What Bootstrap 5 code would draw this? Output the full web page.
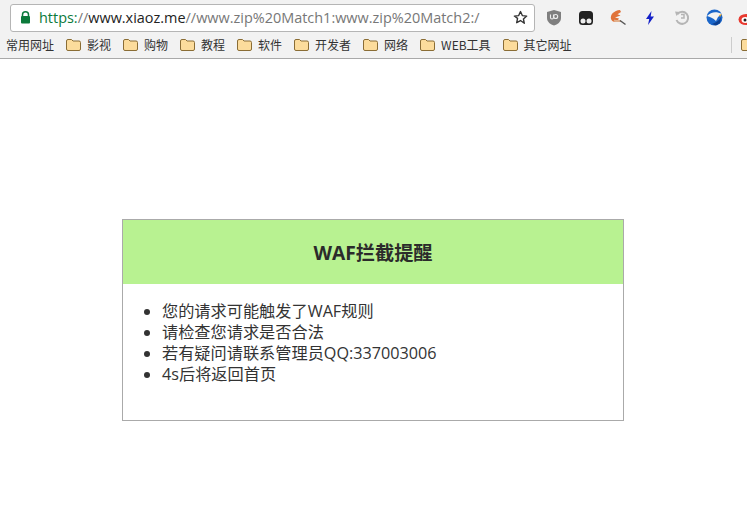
<!DOCTYPE html>
<html lang="zh-CN">
<head>
<meta charset="utf-8">
<title>WAF拦截提醒</title>
<link href="https://cdn.jsdelivr.net/npm/bootstrap@5.3.0/dist/css/bootstrap.min.css" rel="stylesheet">
<style>
html,body{height:100%;overflow:hidden}
body{background:#fff;color:#333;font-family:"Open Sans","Noto Sans CJK SC",sans-serif}
.chrome-bar{background:#f2f2f2;border-bottom:1px solid #a9a9a9;height:59px;font-family:"Noto Sans CJK SC",sans-serif}
.url-row{height:33px;padding:2px 0 0 10px;overflow:hidden}
.omni{width:525px;flex:none;height:28px;background:#fff;border:1px solid #b5b5b5;border-radius:3px;padding:0 6px 0 9px}
.url-text{font-family:"Open Sans",sans-serif;font-size:14.45px;color:#777;margin-left:8px;white-space:nowrap}
.url-scheme{color:#0b7a3b}
.url-host{color:#222}
.ext-row{margin-left:3px;flex:none}
.ext{width:32px;height:28px;display:flex;align-items:center;justify-content:center;flex:none}
.bm-row{height:23px;padding-left:6px;font-size:12px;color:#333;white-space:nowrap;overflow:hidden}
.bm{display:flex;align-items:center;gap:6px;margin-right:12px}
.bm-first{margin-right:12px}
.bm-sep{width:1px;height:16px;background:#ccc;margin-left:147px;margin-right:9px;flex:none}
.bm-last{flex:none}
.notice{width:502px;margin:160px 123px 0 122px;border:1px solid #aaa;border-radius:0}
.notice-head{background:#b8f291;height:64px;border:0;border-radius:0!important;font-size:19.2px;font-weight:700;color:#2b2b2b;padding-top:2px;padding-bottom:0}
.notice-body{padding:17px 0 35px}
.notice-list{margin:0;padding-left:39px;font-size:16.2px;line-height:21px;color:#333}
</style>
</head>
<body>
<div class="chrome-bar">
  <div class="url-row d-flex align-items-center">
    <div class="omni d-flex align-items-center">
      <svg width="11" height="13" viewBox="0 0 11 13"><path d="M2.5 5.5V3.8a3 3 0 0 1 6 0v1.7" fill="none" stroke="#0b7a3b" stroke-width="1.5"/><rect x="1" y="5" width="9" height="7.5" rx="1" fill="#0b7a3b"/></svg>
      <span class="url-text"><span class="url-scheme">https:</span>//<span class="url-host">www.xiaoz.me</span>//www.zip%20Match1:www.zip%20Match2:/</span>
      <svg class="ms-auto" width="15" height="15" viewBox="0 0 24 24"><path d="M12 2.5l2.9 6.4 7 .8-5.2 4.7 1.4 6.9L12 16.9l-6.1 3.4 1.4-6.9L2.1 9.7l7-.8z" fill="none" stroke="#333" stroke-width="2.2" stroke-linejoin="round"/></svg>
    </div>
    <div class="ext-row d-flex align-items-center">
      <div class="ext"><svg width="16" height="17" viewBox="0 0 16 17"><path d="M8 1l7 2v6c0 4-3.500 6.500-7 7.500C4.500 15.500 1 13 1 9V3z" fill="#7f7f7f"/><circle cx="9.700" cy="7.500" r="2" fill="none" stroke="#eee" stroke-width="1.100"/><path d="M4.500 5.500v3a1.500 1.500 0 0 0 3 0v-3" fill="none" stroke="#eee" stroke-width="1.100"/></svg></div>
      <div class="ext"><svg width="16" height="16" viewBox="0 0 16 16"><rect x="1" y="1" width="14" height="14" rx="3.500" fill="#222"/><circle cx="5" cy="11" r="2.500" fill="#eee"/><circle cx="11" cy="11" r="2.500" fill="#eee"/></svg></div>
      <div class="ext"><svg width="18" height="18" viewBox="0 0 18 18"><path d="M11 1C5 1.500 1 5.500 2 10c1 2.500 3.500 3.500 6 2.500l2-3-4-1 5.500-2-3-1.200L12 3z" fill="#e0733a"/><path d="M5 11.500c2.500 1 5 .5 7 .5" stroke="#e2b08c" stroke-width="2" fill="none"/><path d="M11 11.500l5.500 4" stroke="#555" stroke-width="1.500"/></svg></div>
      <div class="ext"><svg width="10" height="14" viewBox="0 0 10 14"><path d="M6.500 0L1 8h3.200L3 14l6-8.500H5.700z" fill="#1420c8"/></svg></div>
      <div class="ext"><svg width="16" height="16" viewBox="0 0 16 16"><path d="M3.500 4A6 6 0 1 1 2.500 10" fill="none" stroke="#b5b5b5" stroke-width="2"/><path d="M1 1.500l5 .5-3.500 4z" fill="#b5b5b5"/><path d="M7 4.500h3v3.500H7" fill="none" stroke="#b5b5b5" stroke-width="1.500"/></svg></div>
      <div class="ext"><svg width="17" height="17" viewBox="0 0 17 17"><circle cx="8.500" cy="8.500" r="8" fill="#1b66c9"/><path d="M1 7c4-4 9-5 15-2l-4 3-2 4C7 9 4 8 1 7z" fill="#f3f3f3"/><path d="M6 15c3-1 7-3 9-7l-1 6-4 2.500z" fill="#0d3f8f"/><path d="M13 6l3-1-2 3z" fill="#e9a321"/></svg></div>
      <div class="ext"><svg width="17" height="17" viewBox="0 0 17 17"><ellipse cx="8" cy="10.500" rx="7.500" ry="5.500" fill="#e8392f"/><ellipse cx="7.500" cy="11" rx="4" ry="3" fill="#fff"/><circle cx="7" cy="11" r="1.500" fill="#222"/><path d="M11 2a4.500 4.500 0 0 1 5 5" fill="none" stroke="#e9a321" stroke-width="1.500"/></svg></div>
    </div>
  </div>
  <div class="bm-row d-flex align-items-center">
    <span class="bm-first">常用网址</span>
    <span class="bm"><svg width="15" height="13" viewBox="0 0 15 13"><path d="M2 1.500h3.500l1.500 1.500h6a1.500 1.500 0 0 1 1.500 1.500v6.500a1.500 1.500 0 0 1-1.500 1.500H2A1.500 1.500 0 0 1 .5 11V3A1.500 1.500 0 0 1 2 1.500z" fill="#fcdc9c" stroke="#8a6d35"/></svg>影视</span>
    <span class="bm"><svg width="15" height="13" viewBox="0 0 15 13"><path d="M2 1.500h3.500l1.500 1.500h6a1.500 1.500 0 0 1 1.500 1.500v6.500a1.500 1.500 0 0 1-1.500 1.500H2A1.500 1.500 0 0 1 .5 11V3A1.500 1.500 0 0 1 2 1.500z" fill="#fcdc9c" stroke="#8a6d35"/></svg>购物</span>
    <span class="bm"><svg width="15" height="13" viewBox="0 0 15 13"><path d="M2 1.500h3.500l1.500 1.500h6a1.500 1.500 0 0 1 1.500 1.500v6.500a1.500 1.500 0 0 1-1.500 1.500H2A1.500 1.500 0 0 1 .5 11V3A1.500 1.500 0 0 1 2 1.500z" fill="#fcdc9c" stroke="#8a6d35"/></svg>教程</span>
    <span class="bm"><svg width="15" height="13" viewBox="0 0 15 13"><path d="M2 1.500h3.500l1.500 1.500h6a1.500 1.500 0 0 1 1.500 1.500v6.500a1.500 1.500 0 0 1-1.500 1.500H2A1.500 1.500 0 0 1 .5 11V3A1.500 1.500 0 0 1 2 1.500z" fill="#fcdc9c" stroke="#8a6d35"/></svg>软件</span>
    <span class="bm"><svg width="15" height="13" viewBox="0 0 15 13"><path d="M2 1.500h3.500l1.500 1.500h6a1.500 1.500 0 0 1 1.500 1.500v6.500a1.500 1.500 0 0 1-1.500 1.500H2A1.500 1.500 0 0 1 .5 11V3A1.500 1.500 0 0 1 2 1.500z" fill="#fcdc9c" stroke="#8a6d35"/></svg>开发者</span>
    <span class="bm"><svg width="15" height="13" viewBox="0 0 15 13"><path d="M2 1.500h3.500l1.500 1.500h6a1.500 1.500 0 0 1 1.500 1.500v6.500a1.500 1.500 0 0 1-1.500 1.500H2A1.500 1.500 0 0 1 .5 11V3A1.500 1.500 0 0 1 2 1.500z" fill="#fcdc9c" stroke="#8a6d35"/></svg>网络</span>
    <span class="bm"><svg width="15" height="13" viewBox="0 0 15 13"><path d="M2 1.500h3.500l1.500 1.500h6a1.500 1.500 0 0 1 1.500 1.500v6.500a1.500 1.500 0 0 1-1.500 1.500H2A1.500 1.500 0 0 1 .5 11V3A1.500 1.500 0 0 1 2 1.500z" fill="#fcdc9c" stroke="#8a6d35"/></svg>WEB工具</span>
    <span class="bm"><svg width="15" height="13" viewBox="0 0 15 13"><path d="M2 1.500h3.500l1.500 1.500h6a1.500 1.500 0 0 1 1.500 1.500v6.500a1.500 1.500 0 0 1-1.500 1.500H2A1.500 1.500 0 0 1 .5 11V3A1.500 1.500 0 0 1 2 1.500z" fill="#fcdc9c" stroke="#8a6d35"/></svg>其它网址</span>
    <span class="bm-sep"></span>
    <svg class="bm-last" width="15" height="13" viewBox="0 0 15 13"><path d="M2 1.500h3.500l1.500 1.500h6a1.500 1.500 0 0 1 1.500 1.500v6.500a1.500 1.500 0 0 1-1.500 1.500H2A1.500 1.500 0 0 1 .5 11V3A1.500 1.500 0 0 1 2 1.500z" fill="#fcdc9c" stroke="#8a6d35"/></svg>
  </div>
</div>
<div class="card notice">
  <div class="card-header notice-head d-flex align-items-center justify-content-center">WAF拦截提醒</div>
  <div class="card-body notice-body">
    <ul class="notice-list">
      <li>您的请求可能触发了WAF规则</li>
      <li>请检查您请求是否合法</li>
      <li>若有疑问请联系管理员QQ:337003006</li>
      <li>4s后将返回首页</li>
    </ul>
  </div>
</div>
<script src="https://cdn.jsdelivr.net/npm/bootstrap@5.3.0/dist/js/bootstrap.bundle.min.js"></script>
</body>
</html>
